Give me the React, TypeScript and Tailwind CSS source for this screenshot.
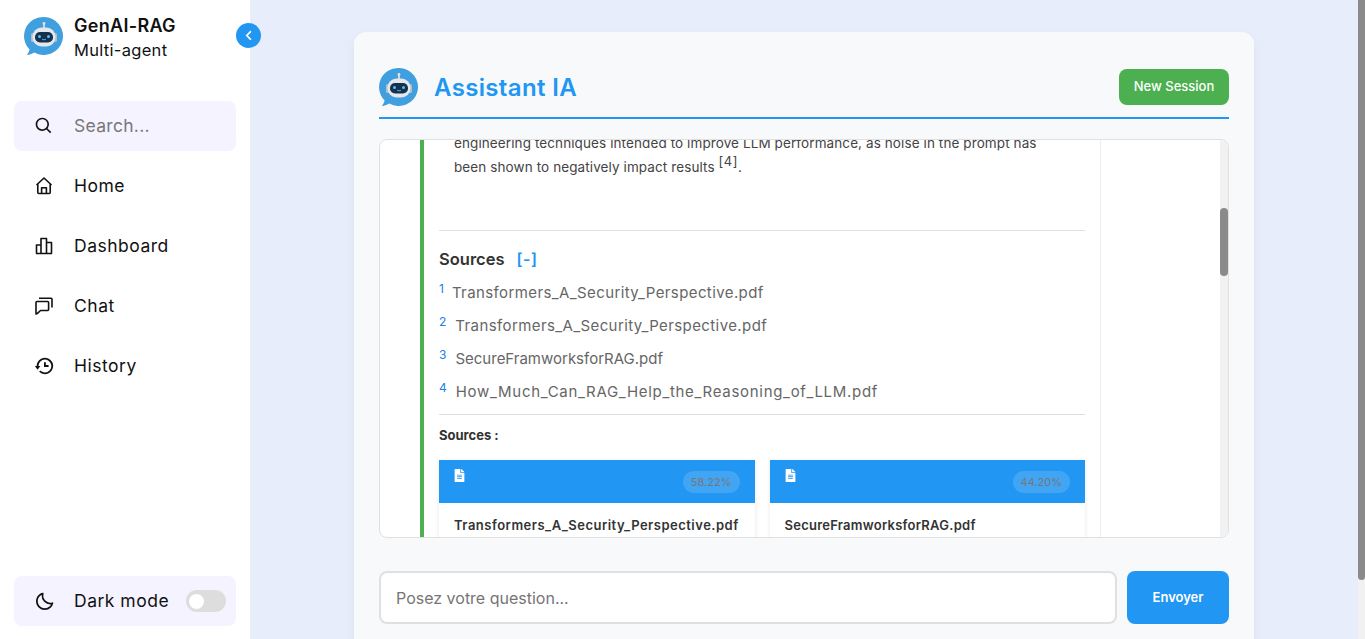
import { BiSearch, BiHistory, BiMoon } from "react-icons/bi";
import { FaFileAlt, FaChevronLeft } from "react-icons/fa";

function RobotLogo({ size }: { size: number }) {
  return (
    <svg width={size} height={size} viewBox="0 0 40 40" className="shrink-0">
      <path d="M20 1a19 19 0 1 1-9.6 35.4C8.5 37.6 6 38.6 2.6 39c1.5-1.4 2.6-3.4 3-5.6A19 19 0 0 1 20 1z" fill="#3f9fdf" />
      <rect x="19" y="7.5" width="2" height="5" fill="#cfd6dc" />
      <circle cx="20" cy="7.5" r="1.4" fill="#dfe4e8" />
      <rect x="7" y="17" width="3" height="9" rx="1.5" fill="#b4bec6" />
      <rect x="30" y="17" width="3" height="9" rx="1.5" fill="#b4bec6" />
      <rect x="8.5" y="11.5" width="23" height="19" rx="9" fill="#e4e8ec" />
      <rect x="11" y="16" width="18" height="10.5" rx="5" fill="#17304d" />
      <circle cx="15.5" cy="20.5" r="1.5" fill="#4fc3f7" />
      <circle cx="24.5" cy="20.5" r="1.5" fill="#4fc3f7" />
      <path d="M18 23c1 1 3 1 4 0" stroke="#4fc3f7" strokeWidth="0.9" fill="none" />
    </svg>
  );
}

function HomeIcon() {
  return (
    <svg width="18" height="18" viewBox="0 0 18 18" fill="none" stroke="#111" strokeWidth="1.6" strokeLinejoin="round">
      <path d="M1.5 8 9 1l7.5 7M2.8 6.8V15.5a1 1 0 0 0 1 1h10.4a1 1 0 0 0 1-1V6.8" />
      <path d="M6.6 16.5v-5.7h4.8v5.7" />
    </svg>
  );
}

function DashboardIcon() {
  return (
    <svg width="18" height="18" viewBox="0 0 18 18" fill="none" stroke="#111" strokeWidth="1.6" strokeLinejoin="round">
      <path d="M1 16.5h16M1.5 16.5V8h4.5v8.5M6 16.5V1.5h5.5v15M11.5 16.5V5.5h5v11" />
    </svg>
  );
}

function ChatIcon() {
  return (
    <svg width="18" height="18" viewBox="0 0 18 18" fill="none" stroke="#111" strokeWidth="1.6" strokeLinejoin="round">
      <path d="M1 5.5a1 1 0 0 1 1-1h10.6a1 1 0 0 1 1 1v7a1 1 0 0 1-1 1H5.5L2.2 16.6 1 17z" />
      <path d="M4 1.2h12a1 1 0 0 1 1 1V10.5" />
    </svg>
  );
}

function NavItem({ icon, label }: { icon: React.ReactNode; label: string }) {
  return (
    <div className="flex h-[50px] items-center rounded-lg pl-[21px] mb-[10px]">
      <div className="flex w-[18px] items-center justify-center">{icon}</div>
      <span className="ml-[21px] text-[17.5px] tracking-[0.5px] text-[#111]">{label}</span>
    </div>
  );
}

function SourceLine({ n, name, className }: { n: number; name: string; className: string }) {
  return (
    <div className="flex h-[33px] items-center">
      <span className="-mt-[10px] text-[12px] text-[#1a7fe8]">{n}</span>
      <span className={`${className} text-[15px] text-[#666]`}>{name}</span>
    </div>
  );
}

function SourceCard({ score, title, className }: { score: string; title: string; className: string }) {
  return (
    <div className="h-[110px] min-w-0 flex-1 bg-white shadow-[0_1px_4px_rgba(0,0,0,0.1)]">
      <div className="flex h-[43px] justify-between bg-[#2196f3] pl-[14px] pr-[15px]">
        <FaFileAlt size={13} className="mt-[9px] text-white" />
        <span className="mt-[11px] flex h-[22px] items-center rounded-full bg-white/15 px-2 text-[11px] text-[#777]">{score}</span>
      </div>
      <p className={`${className} overflow-hidden whitespace-nowrap px-[15px] pt-[14px] text-[13px] font-semibold leading-4 text-[#333]`}>{title}</p>
    </div>
  );
}

export default function App() {
  return (
    <div className="relative flex h-[639px] overflow-hidden bg-[#e8edfb] font-['Inter','Noto_Sans',sans-serif]">
      {/* Sidebar */}
      <aside className="relative flex w-[250px] shrink-0 flex-col bg-white px-[14px]">
        <div className="flex pl-[10px] pt-[16px]">
          <RobotLogo size={40} />
          <div className="-mt-[1px] ml-[10px]">
            <p className="text-[18px] font-semibold leading-[22px] tracking-[0.3px] text-[#111]">GenAI-RAG</p>
            <p className="mt-[2px] text-[16.5px] leading-[22px] tracking-[0.3px] text-[#111]">Multi-agent</p>
          </div>
        </div>
        <button className="absolute left-[236px] top-[23px] flex h-[25px] w-[25px] items-center justify-center rounded-full bg-[#2196f3] text-white">
          <FaChevronLeft size={11} />
        </button>

        <div className="mt-[40px] flex h-[50px] items-center rounded-lg bg-[#f5f3ff] pl-[20px] mb-[10px]">
          <BiSearch size={20} className="text-[#111]" />
          <span className="ml-[20px] text-[17.5px] tracking-[0.3px] text-[#777]">Search...</span>
        </div>
        <NavItem icon={<HomeIcon />} label="Home" />
        <NavItem icon={<DashboardIcon />} label="Dashboard" />
        <NavItem icon={<ChatIcon />} label="Chat" />
        <NavItem icon={<BiHistory size={22} className="shrink-0 text-[#111]" />} label="History" />

        <div className="mt-auto mb-[13px] flex h-[50px] items-center rounded-lg bg-[#f5f3ff] pl-[20px] pr-[10px]">
          <BiMoon size={21} className="text-[#111]" />
          <span className="ml-[19px] mt-[1px] text-[17.5px] tracking-[0.5px] text-[#111]">Dark mode</span>
          <div className="ml-auto flex h-[22px] w-[40px] items-center rounded-full bg-[#ddd] pl-[3px]">
            <div className="h-[15px] w-[15px] rounded-full bg-white" />
          </div>
        </div>
      </aside>

      {/* Main */}
      <main className="flex min-w-0 flex-1 justify-center pt-[32px]">
        <div className="h-[700px] w-[900px] rounded-xl bg-[#f8f9fb] px-[25px] pt-[35px] shadow-[0_4px_12px_rgba(0,0,0,0.05)]">
          <div className="flex h-[52px] justify-between border-b-2 border-[#2196f3]">
            <div className="flex h-[40px] items-center">
              <RobotLogo size={40} />
              <h1 className="ml-[15px] mt-[2px] text-[24px] font-semibold tracking-[0.35px] text-[#2196f3]">Assistant IA</h1>
            </div>
            <button className="mt-[2px] h-[36px] w-[110px] rounded-lg bg-[#4caf50] text-[13px] font-medium text-white">New Session</button>
          </div>

          {/* Chat box */}
          <div className="mt-[20px] flex h-[399px] overflow-hidden rounded-lg border border-[#e0e0e0] bg-white">
            <div className="flex min-w-0 flex-1">
              <div className="ml-[40px] w-[681px] shrink-0 overflow-hidden border-l-4 border-r border-l-[#4caf50] border-r-[#eee] px-[15px]">
                <p className="-mt-[9px] px-[15px] text-[13.5px] leading-6 tracking-[0.1px] text-[#444]">
                  engineering techniques intended to improve LLM performance, as noise in the prompt has
                  <br />
                  been shown to negatively impact results <sup className="text-[13px] leading-none tracking-[0.5px]">[4]</sup>.
                </p>
                <div className="mt-[51px] border-t border-[#e0e0e0]" />
                <div className="mt-[16px] flex h-[24px] items-center">
                  <span className="text-[16.5px] font-semibold text-[#333]">Sources</span>
                  <span className="ml-[12px] text-[16px] font-semibold tracking-[0.5px] text-[#2196f3]">[-]</span>
                </div>
                <div className="mt-[6px]">
                  <SourceLine n={1} name="Transformers_A_Security_Perspective.pdf" className="ml-[8px] tracking-[0.4px]" />
                  <SourceLine n={2} name="Transformers_A_Security_Perspective.pdf" className="ml-[9px] tracking-[0.4px]" />
                  <SourceLine n={3} name="SecureFramworksforRAG.pdf" className="ml-[9px]" />
                  <SourceLine n={4} name="How_Much_Can_RAG_Help_the_Reasoning_of_LLM.pdf" className="ml-[9px] tracking-[0.7px]" />
                </div>
                <div className="mt-[5px] border-t border-[#ddd]" />
                <p className="mt-[12px] text-[13px] font-bold leading-4 text-[#333]">Sources :</p>
                <div className="mt-[17px] flex gap-[15px]">
                  <SourceCard score="58.22%" title="Transformers_A_Security_Perspective.pdf" className="tracking-[0.5px]" />
                  <SourceCard score="44.20%" title="SecureFramworksforRAG.pdf" className="tracking-[0.25px]" />
                </div>
              </div>
            </div>
            <div className="w-[8px] shrink-0 bg-[#f1f1f1] pt-[68px]">
              <div className="h-[68px] rounded-full bg-[#8a8a8a]" />
            </div>
          </div>

          {/* Input row */}
          <div className="mt-[33px] flex h-[53px] gap-[10px]">
            <div className="flex flex-1 items-center rounded-lg border-2 border-[#e0e0e0] bg-white pl-[15px] text-[16px] text-[#757575]">Posez votre question...</div>
            <button className="w-[102px] rounded-lg bg-[#2196f3] text-[13px] font-semibold text-white">Envoyer</button>
          </div>
        </div>
      </main>

      {/* Page scrollbar */}
      <div className="w-[7px] shrink-0 bg-[#f1f1f1]">
        <div className="h-[580px] rounded-b-full bg-[#8a8a8a]" />
      </div>
    </div>
  );
}
